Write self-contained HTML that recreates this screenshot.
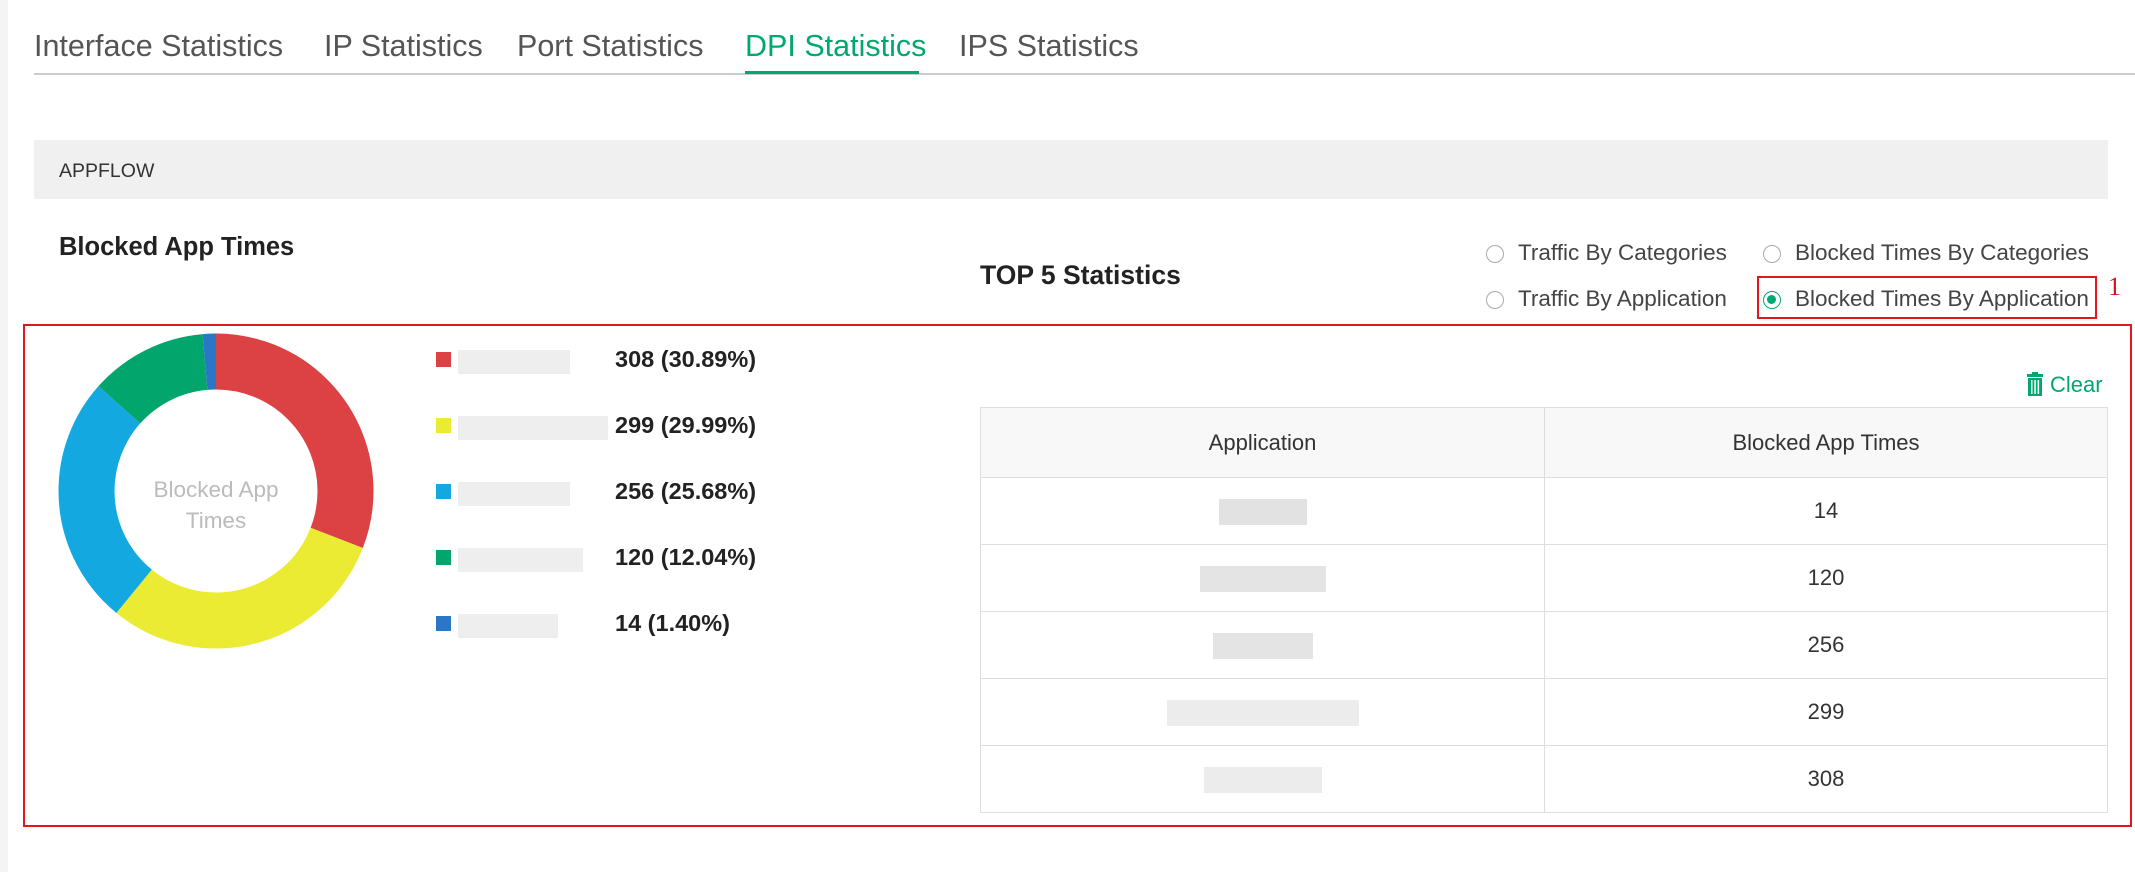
<!DOCTYPE html>
<html><head><meta charset="utf-8"><style>
*{margin:0;padding:0;box-sizing:border-box}
body{width:2135px;height:872px;background:#fff;font-family:"Liberation Sans",sans-serif;position:relative;overflow:hidden;color:#333}
.a{position:absolute;white-space:nowrap}
.tab{font-size:30.5px;color:#555;top:29px}
.blur{position:absolute;background:#e4e4e4}
.radio{position:absolute;width:18px;height:18px;border:1.5px solid #aaa;border-radius:50%}
.rl{font-size:22.5px;color:#444}
.sq{position:absolute;width:15px;height:15px}
.val{font-size:23.5px;font-weight:bold;color:#222}
table{position:absolute;left:980px;top:407px;width:1128px;border-collapse:collapse;font-size:22px;color:#333}
td,th{border:1.5px solid #ddd;text-align:center;font-weight:normal;height:67px}
th{background:#f8f8f8;height:70px}
</style></head><body>
<div class="a" style="left:0;top:0;width:8px;height:872px;background:#f4f4f4"></div>
<div class="a tab" style="left:34px">Interface Statistics</div>
<div class="a tab" style="left:324px">IP Statistics</div>
<div class="a tab" style="left:517px">Port Statistics</div>
<div class="a tab" style="left:745px;color:#00a870">DPI Statistics</div>
<div class="a tab" style="left:959px">IPS Statistics</div>
<div class="a" style="left:34px;top:73px;width:2101px;height:1.5px;background:#ccc"></div>
<div class="a" style="left:745px;top:71px;width:174px;height:3px;background:#00a870"></div>

<div class="a" style="left:34px;top:140px;width:2074px;height:59px;background:#f0f0f0"></div>
<div class="a" style="left:59px;top:160px;font-size:19.5px;color:#333">APPFLOW</div>

<div class="a" style="left:59px;top:233px;font-size:25.5px;font-weight:bold;color:#222">Blocked App Times</div>
<div class="a" style="left:980px;top:260px;font-size:26.5px;font-weight:bold;color:#222">TOP 5 Statistics</div>

<div class="radio" style="left:1486px;top:245px"></div><div class="a rl" style="left:1518px;top:240px">Traffic By Categories</div>
<div class="radio" style="left:1763px;top:245px"></div><div class="a rl" style="left:1795px;top:240px">Blocked Times By Categories</div>
<div class="radio" style="left:1486px;top:291px"></div><div class="a rl" style="left:1518px;top:286px">Traffic By Application</div>
<div class="radio" style="left:1763px;top:291px;border-color:#00a870"><div style="margin:3px;width:9px;height:9px;border-radius:50%;background:#00a870"></div></div><div class="a rl" style="left:1795px;top:286px">Blocked Times By Application</div>
<div class="a" style="left:1757px;top:276px;width:340px;height:43px;border:2px solid #e8141c"></div>
<div class="a" style="left:2108px;top:272px;font-family:'Liberation Serif',serif;font-size:26px;color:#d4141c">1</div>

<div class="a" style="left:23px;top:324px;width:2109px;height:503px;border:2px solid #e8141c"></div>

<svg class="a" style="left:58px;top:333px" width="316" height="316" viewBox="0 0 316 316">
<g transform="translate(158,158) rotate(-90)" fill="none" stroke-width="56">
<circle r="129.5" stroke="#dc4143" stroke-dasharray="251.3 1000" stroke-dashoffset="0"/>
<circle r="129.5" stroke="#ebeb33" stroke-dasharray="244 1000" stroke-dashoffset="-251.3"/>
<circle r="129.5" stroke="#13a9e0" stroke-dasharray="209 1000" stroke-dashoffset="-495.3"/>
<circle r="129.5" stroke="#02a56c" stroke-dasharray="98 1000" stroke-dashoffset="-704.3"/>
<circle r="129.5" stroke="#2c76c8" stroke-dasharray="11.4 1000" stroke-dashoffset="-802.3"/>
</g>
<text x="158" y="164" text-anchor="middle" font-size="22.5" fill="#bbb" font-family="Liberation Sans">Blocked App</text>
<text x="158" y="195" text-anchor="middle" font-size="22.5" fill="#bbb" font-family="Liberation Sans">Times</text>
</svg>

<div class="sq" style="left:436px;top:352px;background:#dc4143"></div><div class="blur" style="left:458px;top:350px;width:112px;height:24px;background:#eee"></div><div class="a val" style="left:615px;top:346px">308 (30.89%)</div>
<div class="sq" style="left:436px;top:418px;background:#ebeb33"></div><div class="blur" style="left:458px;top:416px;width:150px;height:24px;background:#eee"></div><div class="a val" style="left:615px;top:412px">299 (29.99%)</div>
<div class="sq" style="left:436px;top:484px;background:#13a9e0"></div><div class="blur" style="left:458px;top:482px;width:112px;height:24px;background:#eee"></div><div class="a val" style="left:615px;top:478px">256 (25.68%)</div>
<div class="sq" style="left:436px;top:550px;background:#02a56c"></div><div class="blur" style="left:458px;top:548px;width:125px;height:24px;background:#eee"></div><div class="a val" style="left:615px;top:544px">120 (12.04%)</div>
<div class="sq" style="left:436px;top:616px;background:#2c76c8"></div><div class="blur" style="left:458px;top:614px;width:100px;height:24px;background:#eee"></div><div class="a val" style="left:615px;top:610px">14 (1.40%)</div>

<svg class="a" style="left:2026px;top:372px" width="18" height="24" viewBox="0 0 18 24"><rect x="1" y="2" width="16" height="3" fill="#00a870"/><rect x="6" y="0" width="6" height="2" fill="#00a870"/><rect x="2" y="6" width="14" height="18" fill="#00a870"/><rect x="5" y="8" width="1.5" height="14" fill="#fff"/><rect x="8.3" y="8" width="1.5" height="14" fill="#fff"/><rect x="11.6" y="8" width="1.5" height="14" fill="#fff"/></svg>
<div class="a" style="left:2050px;top:372px;font-size:22px;color:#00a870">Clear</div>

<table>
<tr><th style="width:564px">Application</th><th>Blocked App Times</th></tr>
<tr><td><span style="display:inline-block;width:88px;height:26px;background:#e2e2e2;vertical-align:middle"></span></td><td>14</td></tr>
<tr><td><span style="display:inline-block;width:126px;height:26px;background:#e4e4e4;vertical-align:middle"></span></td><td>120</td></tr>
<tr><td><span style="display:inline-block;width:100px;height:26px;background:#e4e4e4;vertical-align:middle"></span></td><td>256</td></tr>
<tr><td><span style="display:inline-block;width:192px;height:26px;background:#ececec;vertical-align:middle"></span></td><td>299</td></tr>
<tr><td><span style="display:inline-block;width:118px;height:26px;background:#ececec;vertical-align:middle"></span></td><td>308</td></tr>
</table>
</body></html>
